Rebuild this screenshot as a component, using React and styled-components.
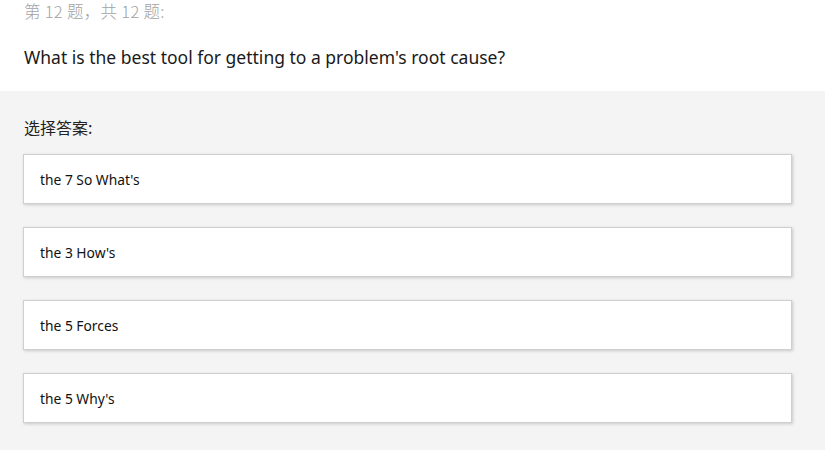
import React from 'react';
import styled, { createGlobalStyle } from 'styled-components';

const GlobalStyle = createGlobalStyle`
  html, body {
    margin: 0;
    padding: 0;
    background: #f4f4f4;
    font-family: "Noto Sans", "Open Sans", "Noto Sans CJK SC", sans-serif;
  }
`;

const Page = styled.div`
  width: 825px;
  height: 450px;
  overflow: hidden;
  background: #f4f4f4;
`;

const Header = styled.div`
  background: #fff;
  height: 91px;
  padding: 0 24px;
  box-sizing: border-box;
`;

const Counter = styled.div`
  color: #a3a3a3;
  font-size: 16.5px;
  font-weight: 300;
  line-height: 20px;
  padding-top: 1px;
  letter-spacing: 0.3px;
  font-family: "Noto Sans CJK SC", "Noto Sans", sans-serif;
`;

const Question = styled.div`
  color: #1a1a1a;
  font-size: 17.5px;
  line-height: 24px;
  margin-top: 24px;
`;

const Body = styled.div`
  padding: 24px 33px 0 23px;
`;

const Prompt = styled.div`
  color: #222;
  font-size: 16px;
  line-height: 24px;
  margin-left: 1px;
  margin-bottom: 15px;
  font-family: "Noto Sans CJK SC", "Noto Sans", sans-serif;
`;

const Options = styled.div`
  display: flex;
  flex-direction: column;
  gap: 23px;
`;

const Option = styled.div`
  height: 50px;
  box-sizing: border-box;
  background: #fff;
  border: 1px solid #cfcfcf;
  box-shadow: 1px 1px 3px rgba(0, 0, 0, 0.18);
  display: flex;
  align-items: center;
  padding: 0 16px;
  font-size: 13.8px;
  color: #111;
  cursor: pointer;
`;

const options = ["the 7 So What's", "the 3 How's", 'the 5 Forces', "the 5 Why's"];

export default function App() {
  return (
    <Page>
      <GlobalStyle />
      <Header>
        <Counter>第 12 题，共 12 题:</Counter>
        <Question>What is the best tool for getting to a problem's root cause?</Question>
      </Header>
      <Body>
        <Prompt>选择答案:</Prompt>
        <Options>
          {options.map((o) => (
            <Option key={o}>{o}</Option>
          ))}
        </Options>
      </Body>
    </Page>
  );
}
